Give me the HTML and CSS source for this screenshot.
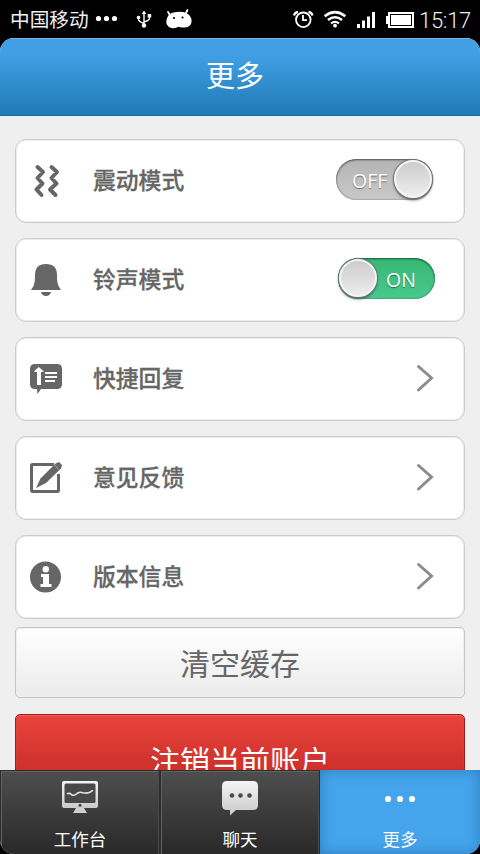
FILE: index.html
```html
<!DOCTYPE html>
<html lang="zh-CN">
<head>
<meta charset="utf-8">
<title>更多</title>
<link rel="stylesheet" href="styles.css">
</head>
<body>
<div class="phone">
  <div class="status">
    <span class="carrier">中国移动</span>
    <svg class="status-left" width="100" height="38" viewBox="95 0 100 38" fill="#fff">
      <circle cx="98.500" cy="18.500" r="2.600"/><circle cx="106.500" cy="18.500" r="2.600"/><circle cx="114.500" cy="18.500" r="2.600"/>
      <path d="M144 13v13M138.500 17v2.500q0 2 5.500 4M149.500 16v2q0 2.500-5.500 4" fill="none" stroke="#fff" stroke-width="1.400"/>
      <path d="M144 10.500l2.300 3.500h-4.600z"/><circle cx="144" cy="25.500" r="2.200"/><circle cx="138.500" cy="17.500" r="1.800"/><path d="M147.700 14h3.500v3.500h-3.500z"/>
      <path d="M168 12l2.500 4M187.500 10l-2 4" stroke="#fff" stroke-width="1.800" stroke-linecap="round"/>
      <path d="M167.500 17q2-4 6-4.500 7-1.500 13 .5 4 2 5 6.500.5 4-2 6.500-2.500 1.800-7 1.500-3 0-4-.8-3 2-7 1.300-3-.6-3.500-2-2-2-1.700-4.500.2-3 1.200-4.500z"/>
      <circle cx="174" cy="18" r="1.100" fill="#000"/><circle cx="182.500" cy="17.500" r="1.100" fill="#000"/>
    </svg>
    <svg class="status-right" width="126" height="38" viewBox="290 0 126 38" fill="#fff">
      <g fill="none" stroke="#fff" stroke-width="1.800">
        <circle cx="303.300" cy="19.800" r="7.300"/><path d="M303 15v5.200h4"/><path d="M294 15.500q.5-3 4-3.700M312.500 15.500q-.5-3-4-3.700" stroke-width="2.200"/>
        <path d="M324.700 16.200q10.300-8 20.600 0" stroke-width="2.700"/><path d="M328 20q7-5.500 14 0" stroke-width="2.500"/><path d="M331 23.300q4-3 8 0" stroke-width="2.200"/>
      </g>
      <circle cx="335" cy="25.700" r="1.900"/>
      <path d="M357 24h3v4h-3zM362 20.500h3V28h-3zM367 16.500h3V28h-3zM372 12h3v16h-3z"/>
      <path d="M389 13h24v14h-24z" fill="none" stroke="#fff" stroke-width="2"/><path d="M391 15h20v10h-20zM386 16h2v8h-2z"/>
    </svg>
    <span class="clock">15:17</span>
  </div>

  <div class="app">
    <header class="header"><h1>更多</h1></header>
    <main class="content">
      <div class="card">
        <svg class="icon" width="34" height="36" viewBox="29 163 34 36" fill="none" stroke="#666" stroke-width="4" stroke-linecap="round" stroke-linejoin="round">
          <path d="M37.500 167l5.500 5-5.500 6 5 5.500-6 6 5 5.500M51.500 167l5.500 5-5.500 6 5 5.500-6.500 6 5.500 5.500"/>
        </svg>
        <span class="label">震动模式</span>
        <div class="switch off"><span>OFF</span><i class="knob"></i></div>
      </div>
      <div class="card">
        <svg class="icon" width="34" height="36" viewBox="29 262 34 36" fill="#666">
          <path d="M31 290q4-5 4-12v-3q0-11 11-11t11 11v3q0 7 4 12zM41 292h10q-1 4-5 4t-5-4z"/>
        </svg>
        <span class="label">铃声模式</span>
        <div class="switch on"><i class="knob"></i><span>ON</span></div>
      </div>
      <div class="card">
        <svg class="icon" width="34" height="36" viewBox="29 361 34 36" fill="#666">
          <path d="M35 364h22q5 0 5 5v15q0 5-5 5H41l-3.500 5-.5-5h-2q-5 0-5-5v-15q0-5 5-5z"/>
          <path d="M38.800 367l5 4.200-.8.800h-2v13h-4V372h-2l-1-.8zM45 372h12v2H45zM45 376h12v2H45zM45 380h10v2H45z" fill="#fff"/>
        </svg>
        <span class="label">快捷回复</span>
        <svg class="chevron" width="20" height="30" viewBox="0 0 20 30"><path d="M3.500 3.500l13 11.500-13 12"/></svg>
      </div>
      <div class="card">
        <svg class="icon" width="34" height="36" viewBox="29 460 34 36" fill="#666">
          <path d="M54 464.500H32.500q-1 0-1 1V490q0 1.500 1 1.500h25q1 0 1-1.500v-16" fill="none" stroke="#666" stroke-width="3"/>
          <path d="M36 488l4.500-9.500 15-15 3.500-1.500 3 3-1 3.500-15 14.500z"/>
          <path d="M54 464.500l5 5" stroke="#bbb" stroke-width=".8"/>
        </svg>
        <span class="label">意见反馈</span>
        <svg class="chevron" width="20" height="30" viewBox="0 0 20 30"><path d="M3.500 3.500l13 11.500-13 12"/></svg>
      </div>
      <div class="card">
        <svg class="icon" width="34" height="36" viewBox="29 559 34 36" fill="#666">
          <circle cx="45.500" cy="577" r="15.500"/>
          <path d="M41 574h8v10h2.500v3h-11v-3H43v-7h-2z" fill="#fff"/><circle cx="45.800" cy="569.200" r="3.200" fill="#fff"/>
        </svg>
        <span class="label">版本信息</span>
        <svg class="chevron" width="20" height="30" viewBox="0 0 20 30"><path d="M3.500 3.500l13 11.500-13 12"/></svg>
      </div>
      <button class="btn clear">清空缓存</button>
      <button class="btn logout">注销当前账户</button>
    </main>
    <nav class="tabs">
      <div class="tab">
        <svg width="40" height="38" viewBox="60 778 40 38">
          <defs><linearGradient id="metal" x1="0" y1="0" x2="0" y2="1"><stop offset="0" stop-color="#f4f4f4"/><stop offset="1" stop-color="#c9c9c9"/></linearGradient></defs>
          <path d="M64 781h32q2 0 2 2v23q0 2-2 2H64q-2 0-2-2v-23q0-2 2-2z" fill="url(#metal)"/>
          <rect x="64.500" y="783.500" width="31" height="19.500" rx="1.500" fill="#484848"/>
          <path d="M67.500 793.500q3-.5 4.500 1.500 2.500 1 5-1.500 3-2 6-.8 5.500 1.500 9.500-2" fill="none" stroke="#e4e4e4" stroke-width="1.600" stroke-linecap="round"/>
          <circle cx="80" cy="805.300" r="1.500" fill="#444"/>
          <path d="M76 808h8l3 5H73z" fill="#d0d0d0"/>
        </svg>
        <span>工作台</span>
      </div>
      <div class="tab">
        <svg width="40" height="38" viewBox="220 778 40 38">
          <path d="M227 781h26q5 0 5 5v19q0 5-5 5h-17l-6 5.500v-5.500h-3q-5 0-5-5v-19q0-5 5-5z" fill="url(#metal)"/>
          <g fill="#4a4a4a"><circle cx="232" cy="795.500" r="2.300"/><circle cx="240.500" cy="795.500" r="2.300"/><circle cx="249.500" cy="795.500" r="2.300"/></g>
        </svg>
        <span>聊天</span>
      </div>
      <div class="tab active">
        <svg width="40" height="38" viewBox="380 778 40 38" fill="#fff">
          <circle cx="388" cy="799" r="3.100"/><circle cx="400" cy="799" r="3.100"/><circle cx="412" cy="799" r="3.100"/>
        </svg>
        <span>更多</span>
      </div>
    </nav>
  </div>
</div>
</body>
</html>
```
FILE: styles.css
```css
* { box-sizing: border-box; }
body {
  margin: 0;
  background: #000;
  font-family: "Noto Sans CJK SC", sans-serif;
}
.phone {
  display: flex;
  flex-direction: column;
  width: 480px;
  height: 854px;
  overflow: hidden;
}
.status {
  display: flex;
  align-items: center;
  flex: none;
  height: 38px;
  padding-left: 10px;
  color: #eee;
}
.carrier { width: 85px; font-size: 19.700px; line-height: 36px; white-space: nowrap; }
.status-right { margin-left: 95px; }
.clock {
  margin-left: 3px;
  padding-top: 4px;
  font: 300 22px/34px Roboto, sans-serif;
  letter-spacing: -.3px;
}
.app {
  display: flex;
  flex-direction: column;
  flex: 1;
  min-height: 0;
  overflow: hidden;
  border-radius: 14px;
  background: #efefef;
}
.header {
  flex: none;
  height: 78px;
  background: linear-gradient(#429fe5, #419fe6 20%, #207ab4);
  border-top: 1px solid #66b3ec;
  border-bottom: 1px solid #1b6da3;
  text-align: center;
}
.header h1 {
  margin: 0;
  padding-right: 10px;
  font-size: 29px;
  font-weight: 400;
  line-height: 71px;
  color: #fff;
}
.content {
  flex: 1;
  min-height: 0;
  overflow: hidden;
  padding: 23px 15px 0;
}
.card {
  display: flex;
  align-items: center;
  height: 84px;
  margin-bottom: 15px;
  padding: 0 29px 0 13px;
  border: 1px solid #ccc;
  box-shadow: inset 0 0 0 1px #eee;
  border-radius: 11px;
  background: #fff;
}
.card:nth-child(5) { margin-bottom: 8px; }
.label {
  flex: 1;
  margin: 0 0 2px 30px;
  font-size: 22.800px;
  font-weight: 500;
  line-height: 34px;
  color: #666;
  -webkit-text-stroke: .3px #666;
}
.chevron { fill: none; stroke: #8c8c8c; stroke-width: 3; stroke-linecap: round; margin: 0 0 3px; }
.switch {
  display: flex;
  align-items: center;
  width: 97px;
  height: 41px;
  margin-bottom: 3px;
  border-radius: 21px;
  color: #fff;
  font: 19.500px/38px "Open Sans", sans-serif;
  text-shadow: 0 1px 1px rgba(0, 0, 0, .45);
}
.switch.off {
  margin-right: 2px;
  padding-left: 16px;
  justify-content: space-between;
  background: linear-gradient(#b4b4b4, #c9c9c9);
  box-shadow: inset 0 1px 2px #555, inset 0 0 2px #777;
}
.switch.on {
  background: linear-gradient(#36b873, #48c98d);
  box-shadow: inset 0 1px 2px #16613b, inset 0 0 2px #23885a;
}
.switch.on span { margin-left: 9px; }
.switch span { padding-top: 3px; }
.knob {
  width: 38px;
  height: 38px;
  margin-bottom: 1px;
  border-radius: 50%;
  border: 2px solid #f4f4f4;
  background: linear-gradient(#ccc, #ededed);
  box-shadow: 0 0 1px 1px #6d7479, 0 2px 3px #47545d;
}
.switch.off .knob { margin-right: 1px; }
.switch.on .knob { margin-left: 1px; }
.btn {
  display: block;
  width: 450px;
  height: 71px;
  margin: 0 0 16px;
  padding: 0;
  border-radius: 5px;
  font: 400 30px/69px "Noto Sans CJK SC", sans-serif;
}
.clear {
  border: 1px solid #c5c5c5;
  box-shadow: inset 0 0 0 1px #f0f0f0;
  background: linear-gradient(#fff, #ebebeb);
  color: #666;
  padding-bottom: 2px;
}
.logout {
  height: 90px;
  border: 1px solid #a51c20;
  box-shadow: inset 0 1px 1px #ef625a;
  background: linear-gradient(#ea443b, #c52a28 71px);
  color: #fff;
  line-height: 88px;
}
.tabs {
  display: grid;
  grid-template-columns: repeat(3, 1fr);
  flex: none;
  height: 84px;
}
.tab {
  display: flex;
  flex-direction: column;
  align-items: center;
  padding-top: 7px;
  border: 1px solid #2d2d2d;
  border-bottom: 0;
  background: linear-gradient(#4e4e4e, #292929);
  box-shadow: inset 1px 1px 0 #626262, inset -1px 0 0 #494949;
  color: #fff;
  font-size: 17.500px;
  line-height: 26px;
}
.tab span { margin-top: 10px; }
.tab.active {
  padding-top: 8px;
  border: 0;
  background: #45a4eb;
  box-shadow: inset 0 0 14px #2d7fbe;
}
```
